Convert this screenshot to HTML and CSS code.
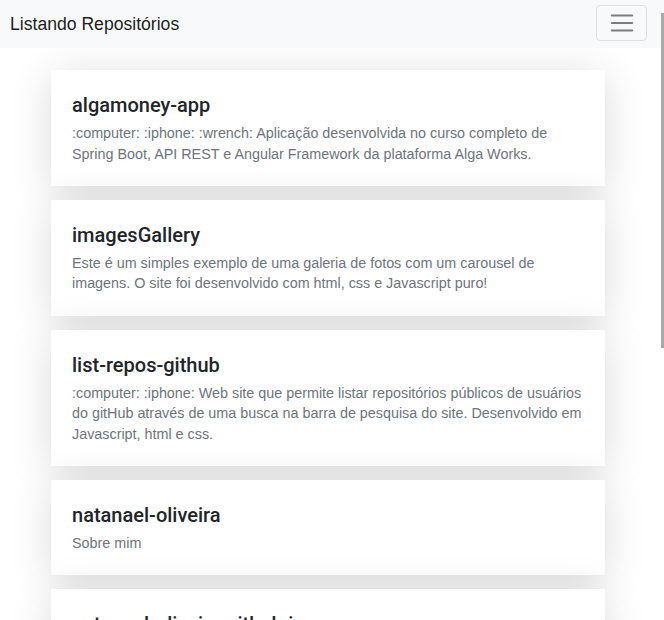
FILE: index.html
```html
<!DOCTYPE html>
<html lang="pt-BR">
<head>
<meta charset="utf-8">
<title>Listando Repositórios</title>
<link rel="stylesheet" href="styles.css">
</head>
<body>
<nav class="navbar">
  <a class="brand" href="#">Listando Repositórios</a>
  <button class="toggler" type="button" aria-label="Menu">
    <svg class="toggler-icon" viewBox="0 0 30 30" width="28" height="28" aria-hidden="true">
      <path d="M4 7h22M4 15h22M4 23h22" stroke="rgba(0,0,0,0.5)" stroke-width="2" stroke-linecap="round" fill="none"/>
    </svg>
  </button>
</nav>
<div class="scroll-thumb" aria-hidden="true"></div>
<main class="repo-list">
  <article class="card">
    <h5 class="card-title">algamoney-app</h5>
    <p class="card-text">:computer: :iphone: :wrench: Aplicação desenvolvida no curso completo de Spring Boot, API REST e Angular Framework da plataforma Alga Works.</p>
  </article>
  <article class="card">
    <h5 class="card-title">imagesGallery</h5>
    <p class="card-text">Este é um simples exemplo de uma galeria de fotos com um carousel de imagens. O site foi desenvolvido com html, css e Javascript puro!</p>
  </article>
  <article class="card">
    <h5 class="card-title">list-repos-github</h5>
    <p class="card-text">:computer: :iphone: Web site que permite listar repositórios públicos de usuários do gitHub através de uma busca na barra de pesquisa do site. Desenvolvido em Javascript, html e css.</p>
  </article>
  <article class="card">
    <h5 class="card-title">natanael-oliveira</h5>
    <p class="card-text">Sobre mim</p>
  </article>
  <article class="card">
    <h5 class="card-title">natanael-oliveira.github.io</h5>
    <p class="card-text">Meu site pessoal.</p>
  </article>
</main>
</body>
</html>
```
FILE: styles.css
```css
html {
  overflow: hidden;
}

body {
  margin: 0;
  background: #ffffff;
  font-family: "Liberation Sans", Arial, sans-serif;
  color: #212529;
}

.navbar {
  display: flex;
  align-items: center;
  justify-content: space-between;
  height: 48px;
  padding: 0 17px 0 10px;
  background: #f8f9fa;
  position: relative;
  z-index: 2;
}

.brand {
  font-size: 17.6px;
  line-height: 27px;
  color: rgba(0, 0, 0, 0.9);
  text-decoration: none;
}

.toggler {
  display: flex;
  align-items: center;
  justify-content: center;
  box-sizing: border-box;
  width: 51px;
  height: 36px;
  margin-top: -2px;
  padding: 0;
  background: transparent;
  border: 1px solid rgba(0, 0, 0, 0.1);
  border-radius: 4px;
}

.toggler-icon {
  display: block;
}

.scroll-thumb {
  position: fixed;
  top: 13px;
  right: 0;
  width: 3px;
  height: 335px;
  background: #a8a8a8;
  z-index: 3;
}

.repo-list {
  width: 554px;
  margin: 22px 0 0 51px;
}

.card {
  background: #ffffff;
  padding: 23px 21px 21.75px 21px;
  margin-bottom: 14px;
  box-shadow: 0 6px 40px rgba(0, 0, 0, 0.15);
}

.card-title {
  margin: 0 0 6px 0;
  font-family: Roboto, "Liberation Sans", sans-serif;
  font-size: 20px;
  font-weight: 500;
  line-height: 24px;
  color: #212529;
}

.card-text {
  margin: 0;
  font-size: 14.35px;
  line-height: 20.5px;
  color: #6c757d;
}
```
